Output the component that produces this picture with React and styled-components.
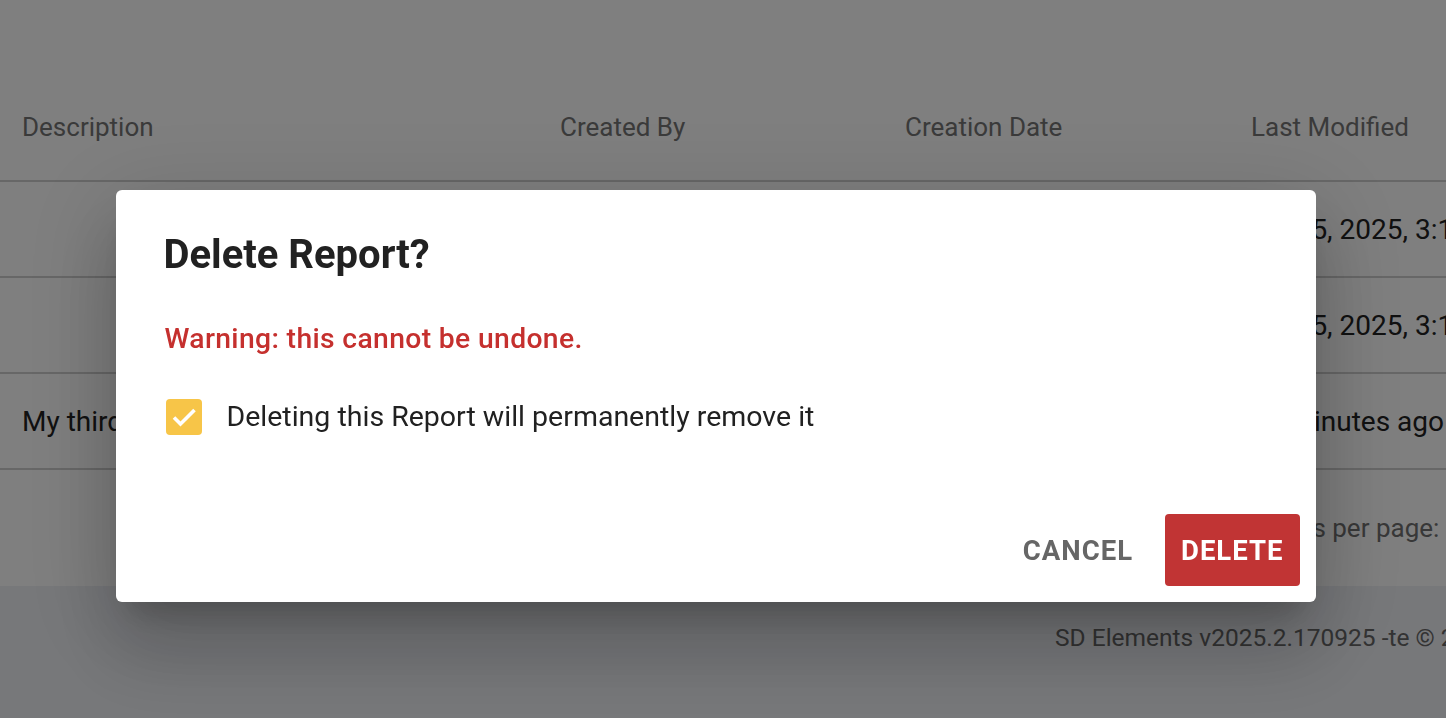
import React from "react";
import styled, { createGlobalStyle } from "styled-components";

const GlobalStyle = createGlobalStyle`
	html, body {
		margin: 0;
		padding: 0;
		background: #ffffff;
		font-family: Roboto, "Liberation Sans", Arial, sans-serif;
		overflow: hidden;
	}
`;

const Page = styled.div`
	width: 100%;
	height: 718px;
	display: flex;
	flex-direction: column;
	background: #ffffff;
	padding-top: 74px;
	box-sizing: border-box;
`;

const Row = styled.div`
	display: grid;
	grid-template-columns: 538px 345px 346px 1fr;
	height: ${(p) => p.$height || 96}px;
	align-items: center;
	border-bottom: 2px solid #cfcfcf;
	box-sizing: border-box;
	white-space: nowrap;
	overflow: hidden;
`;

const Cell = styled.div`
	padding-left: 22px;
	font-size: ${(p) => (p.$head ? 26 : 28)}px;
	color: ${(p) => (p.$head ? "#757575" : "#222222")};
`;

const Pagination = styled.div`
	height: 116px;
	display: flex;
	align-items: center;
	padding-left: 1262px;
	font-size: 26px;
	color: #707070;
	white-space: nowrap;
	overflow: hidden;
`;

const Footer = styled.div`
	flex: 1;
	background: #eef0f5;
	display: flex;
	padding: 37px 0 0 1055px;
	font-size: 24.5px;
	color: #666666;
	white-space: nowrap;
	overflow: hidden;
`;

const Overlay = styled.div`
	position: fixed;
	inset: 0;
	background: rgba(0, 0, 0, 0.5);
	display: flex;
	justify-content: center;
	align-items: flex-start;
	padding: 190px 15px 0 0;
	box-sizing: border-box;
`;

const Dialog = styled.div`
	width: 1200px;
	background: #ffffff;
	border-radius: 6px;
	box-shadow: 0 22px 30px -14px rgba(0, 0, 0, 0.2),
		0 48px 76px 6px rgba(0, 0, 0, 0.14), 0 18px 92px 16px rgba(0, 0, 0, 0.12);
	display: flex;
	flex-direction: column;
`;

const Title = styled.h2`
	margin: 0;
	padding: 40px 48px 18px 48px;
	font-size: 40px;
	font-weight: 700;
	color: #212121;
	line-height: 50px;
`;

const Content = styled.div`
	padding: 20px 48px 0 49px;
	display: flex;
	flex-direction: column;
`;

const Warning = styled.p`
	margin: 0;
	font-size: 28.3px;
	font-weight: 500;
	color: #c5302e;
	line-height: 42px;
	letter-spacing: 0.35px;
`;

const CheckRow = styled.label`
	display: flex;
	align-items: center;
	gap: 25px;
	margin-top: 39px;
	font-size: 28.5px;
	line-height: 36px;
	color: #212121;
`;

const Box = styled.span`
	width: 36px;
	height: 36px;
	margin-left: 1px;
	border-radius: 4px;
	background: #f7c548;
	display: flex;
	align-items: center;
	justify-content: center;
	flex-shrink: 0;
`;

const Actions = styled.div`
	display: flex;
	justify-content: flex-end;
	align-items: center;
	gap: 16px;
	padding: 79px 16px 16px 16px;
`;

const Button = styled.button`
	height: 72px;
	padding: 0 16px;
	border: none;
	border-radius: 4px;
	font-family: inherit;
	font-size: 27.5px;
	font-weight: 700;
	letter-spacing: 1px;
	text-transform: uppercase;
	cursor: pointer;
	background: ${(p) => (p.$danger ? "#c13434" : "transparent")};
	color: ${(p) => (p.$danger ? "#ffffff" : "#666666")};
`;

const rows = [
	["", "", "", "Jul 25, 2025, 3:14 PM"],
	["", "", "", "Jul 25, 2025, 3:12 PM"],
	["My third report", "", "", "10 minutes ago"],
];

export default function App() {
	return (
		<>
			<GlobalStyle />
			<Page>
				<Row $height={108}>
					<Cell $head>Description</Cell>
					<Cell $head>Created By</Cell>
					<Cell $head>Creation Date</Cell>
					<Cell $head>Last Modified</Cell>
				</Row>
				{rows.map((r, i) => (
					<Row key={i}>
						{r.map((c, j) => (
							<Cell key={j}>{c}</Cell>
						))}
					</Row>
				))}
				<Pagination>Rows per page:</Pagination>
				<Footer>SD Elements v2025.2.170925 -te © 2025</Footer>
			</Page>
			<Overlay>
				<Dialog>
					<Title>Delete Report?</Title>
					<Content>
						<Warning>Warning: this cannot be undone.</Warning>
						<CheckRow>
							<Box>
								<svg width="36" height="36" viewBox="0 0 36 36">
									<path
										d="M8 18.5l6.5 6.5L28.5 11"
										fill="none"
										stroke="#ffffff"
										strokeWidth="3.6"
									/>
								</svg>
							</Box>
							Deleting this Report will permanently remove it
						</CheckRow>
					</Content>
					<Actions>
						<Button>Cancel</Button>
						<Button $danger>Delete</Button>
					</Actions>
				</Dialog>
			</Overlay>
		</>
	);
}
